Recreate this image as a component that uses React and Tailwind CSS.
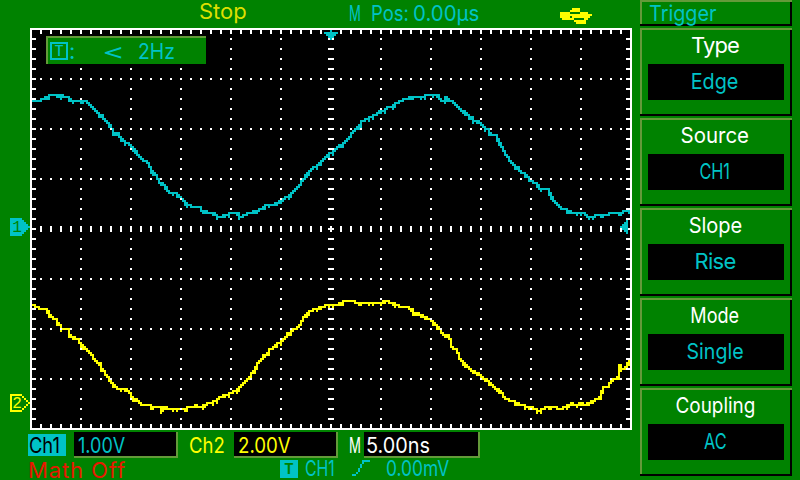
import React from 'react';

// the display is 400x240, every cell is drawn as 2x2 px
const CH1 = [
  [1, 10], [4, 10], [5, 9], [7, 8], [9, 7], [13, 7], [14, 8], [15, 7], [16, 8], [18, 8], [20, 10], [22, 10], [24, 10],
  [27, 10], [29, 12], [31, 14], [33, 16], [35, 17], [36, 19], [37, 20], [39, 22], [40, 24], [41, 26], [42, 27], [43, 26],
  [44, 28], [46, 30], [48, 31], [50, 33], [52, 35], [54, 38], [55, 39], [57, 40], [58, 41], [59, 43], [60, 45], [61, 46],
  [62, 47], [63, 49], [64, 51], [65, 51], [67, 53], [69, 56], [70, 56], [72, 56], [74, 58], [75, 59], [77, 61], [79, 62],
  [80, 63], [84, 63], [85, 65], [87, 65], [88, 66], [91, 66], [92, 67], [94, 68], [96, 67], [101, 66], [103, 66],
  [104, 68], [106, 67], [109, 66], [112, 65], [115, 64], [117, 62], [121, 62], [122, 61], [125, 60], [127, 58],
  [129, 57], [131, 55], [133, 53], [134, 52], [135, 50], [136, 49], [137, 47], [138, 46], [140, 44], [141, 43],
  [143, 42], [145, 40], [147, 38], [149, 36], [151, 35], [152, 34], [153, 33], [154, 32], [156, 31], [158, 29],
  [159, 28], [160, 26], [161, 25], [163, 23], [164, 22], [165, 20], [167, 19], [169, 18], [172, 17], [173, 16],
  [174, 15], [175, 15], [177, 14], [178, 13], [180, 13], [181, 12], [184, 10], [187, 9], [189, 8], [193, 8], [195, 8],
  [198, 7], [203, 7], [204, 9], [206, 10], [207, 8], [208, 9], [210, 10], [212, 12], [214, 14], [216, 15], [218, 17],
  [219, 19], [220, 18], [221, 20], [223, 20], [224, 21], [226, 23], [228, 24], [229, 26], [231, 27], [232, 27],
  [233, 29], [234, 31], [235, 33], [236, 35], [237, 37], [238, 38], [239, 40], [241, 42], [243, 43], [244, 45],
  [246, 46], [248, 48], [250, 50], [252, 51], [253, 52], [254, 54], [258, 54], [259, 56], [260, 58], [261, 60],
  [262, 61], [264, 63], [266, 64], [269, 65], [271, 66], [276, 66], [277, 67], [279, 68], [283, 67], [286, 67],
  [290, 66], [294, 66], [296, 65], [299, 65],
];

const CH2 = [
  [1, 12], [3, 13], [5, 14], [7, 14], [8, 15], [9, 17], [10, 18], [12, 19], [13, 21], [14, 22], [15, 24], [18, 24],
  [19, 27], [20, 28], [23, 29], [24, 31], [26, 33], [28, 35], [30, 37], [32, 40], [34, 41], [35, 44], [36, 45], [37, 47],
  [38, 48], [39, 49], [40, 51], [42, 53], [44, 54], [47, 54], [49, 56], [50, 58], [52, 59], [54, 61], [56, 62], [59, 62],
  [61, 63], [64, 63], [65, 65], [66, 63], [69, 64], [71, 64], [75, 64], [80, 63], [82, 62], [84, 63], [86, 62],
  [89, 61], [91, 60], [92, 60], [94, 58], [97, 57], [100, 56], [101, 55], [103, 54], [105, 52], [107, 50], [109, 48],
  [110, 46], [111, 45], [112, 43], [113, 41], [114, 40], [115, 39], [116, 37], [118, 36], [119, 34], [121, 33],
  [123, 31], [125, 30], [127, 28], [128, 26], [130, 25], [133, 23], [134, 22], [135, 20], [136, 18], [137, 17],
  [139, 15], [142, 14], [145, 13], [147, 12], [149, 12], [152, 12], [154, 11], [156, 10], [160, 10], [164, 11],
  [166, 11], [168, 11], [173, 11], [175, 11], [176, 10], [181, 11], [182, 12], [185, 13], [188, 13], [190, 14],
  [191, 16], [192, 17], [193, 16], [195, 17], [197, 18], [199, 19], [200, 20], [202, 22], [203, 23], [204, 24],
  [205, 26], [206, 27], [208, 27], [209, 29], [210, 33], [212, 34], [213, 36], [214, 39], [216, 41], [218, 43],
  [219, 44], [221, 45], [223, 46], [225, 48], [227, 49], [229, 51], [231, 53], [233, 54], [235, 56], [236, 58],
  [238, 59], [240, 60], [243, 61], [245, 62], [249, 63], [252, 64], [253, 65], [255, 64], [258, 63], [261, 63],
  [265, 64], [266, 63], [269, 62], [270, 61], [272, 62], [275, 61], [276, 62], [278, 61], [280, 60], [282, 59],
  [284, 58], [285, 55], [286, 53], [288, 53], [289, 51], [291, 49], [293, 48], [294, 42], [295, 44], [297, 43],
  [298, 41], [299, 40],
];

// columns where the signal jitters get one extra cell
const jitter = (x) => ((x * 37 + ((x * x) >> 2)) % 13 < 5 ? 1 : 0);

// one vertical run of cells per column, joined to the column before
const tracePath = (points, top) => {
  let d = '';
  let prev = points[0][1];
  for (let i = 1; i < points.length; i++) {
    const [x0, y0] = points[i - 1];
    const [x1, y1] = points[i];
    for (let x = x0; x < x1 || (i === points.length - 1 && x === x1); x++) {
      const y = Math.round(y0 + ((y1 - y0) * (x - x0)) / (x1 - x0));
      const a = Math.min(prev, y);
      const b = Math.max(prev, y);
      d += `M${x} ${a + top}h1v${b - a + 1 + jitter(x)}h-1z`;
      prev = y;
    }
  }
  return d;
};

const gridPath = () => {
  let d = '';
  for (let x = 5; x < 300; x += 5) {
    d += `M${x} 1h1v2h-1zM${x} 198h1v2h-1zM${x} 99h1v3h-1z`;
    for (let y = 25; y < 200; y += 25) d += `M${x} ${y}h1v1h-1z`;
  }
  for (let y = 5; y < 200; y += 5) {
    d += `M1 ${y}h2v1h-2zM298 ${y}h2v1h-2zM149 ${y}h3v1h-3z`;
    for (let x = 25; x < 300; x += 25) d += `M${x} ${y}h1v1h-1z`;
  }
  return d;
};

const menu = [
  { label: 'Type', value: 'Edge', labelStyle: 'tracking-[-0.9px]', valueStyle: 'scale-x-[0.9]' },
  { label: 'Source', value: 'CH1', labelStyle: 'scale-x-[0.93]', valueStyle: 'scale-x-[0.74]' },
  { label: 'Slope', value: 'Rise', labelStyle: 'scale-x-[0.91]', valueStyle: 'tracking-[-0.7px]' },
  { label: 'Mode', value: 'Single', labelStyle: 'scale-x-[0.82]', valueStyle: 'scale-x-[0.89]' },
  { label: 'Coupling', value: 'AC', labelStyle: 'scale-x-[0.86]', valueStyle: 'scale-x-[0.74]' },
];

function MenuItem({ item }) {
  return (
    <div className="h-[88px] px-2 pt-1.5 text-center shadow-[inset_0_2px_#639a39,inset_0_-2px_#000,inset_2px_0_#639a39,inset_-2px_0_#000]">
      <div className="h-[30px] pr-0.5 leading-[22px] text-white">
        <span className={`inline-block ${item.labelStyle}`}>{item.label}</span>
      </div>
      <div className="h-9 bg-black pr-0.5 leading-[34px] text-[#00c3c6]">
        <span className={`inline-block ${item.valueStyle}`}>{item.value}</span>
      </div>
    </div>
  );
}

function UsbIcon() {
  return (
    <svg className="h-4 w-8" viewBox="0 0 16 8" shapeRendering="crispEdges" fill="#ffff00">
      <path d="M6 0h4v1h-4zM5 1h5v1h-5zM0 2h5v1h-5zM10 2h4v1h-4zM0 3h16v1h-16zM0 4h5v1h-5zM6 4h9v1h-9zM1 5h6v1h-6zM12 5h2v1h-2zM7 6h6v1h-6zM8 7h5v1h-5z" />
    </svg>
  );
}

function Screen() {
  return (
    <div className="relative h-[402px] w-[602px] bg-black">
      <svg className="block h-full w-full" viewBox="0 0 301 201" shapeRendering="crispEdges">
        <path d={tracePath(CH1, 26)} fill="#00c3c6" />
        <path d={tracePath(CH2, 126)} fill="#ffff00" />
        <path d={gridPath()} fill="#fff" />
        <path d="M0 0h301v201h-301zM1 1v199h299v-199z" fill="#fff" fillRule="evenodd" />
        <path d="M150 1h1v1h3v1h-1v1h-1v1h-1v1h-1v-1h-1v-1h-1v-1h-1v-1h3z" fill="#00c3c6" />
        <path d="M298 96h1v7h-1v-1h-1v-1h-1v-1h-1v-1h1v-1h1v-1h1z" fill="#00c3c6" />
      </svg>
      <div className="absolute left-4 top-2 flex h-7 w-40 items-start border-l-2 border-t-2 border-[#639a39] bg-[#008200] pl-0.5 pt-1 leading-[18px] text-[#00c3c6]">
        <span className="flex h-[18px] w-[18px] items-center justify-center border-2 border-[#00c3c6] text-[14px] font-medium">T</span>
        <span className="w-[34px] pl-px">:</span>
        <span className="w-9 origin-left scale-x-[1.6]">&lt;</span>
        <span className="origin-left scale-x-[0.88]">2Hz</span>
      </div>
    </div>
  );
}

function ChannelMarkers() {
  return (
    <div className="flex h-[402px] w-[30px] flex-col pl-2.5">
      <svg className="mt-[190px] h-[18px] w-5" viewBox="0 0 10 9" shapeRendering="crispEdges">
        <path d="M0 0h6v1h1v1h1v1h1v1h1v1h-1v1h-1v1h-1v1h-1v1h-6z" fill="#00c3c6" />
        <text x="1.1" y="7" fontSize="8" className="font-[Liberation_Mono] font-normal" fill="#008200">1</text>
      </svg>
      <svg className="mt-[158px] h-[18px] w-5" viewBox="0 0 10 9" shapeRendering="crispEdges">
        <path d="M0 0h6v1h1v1h1v1h1v1h1v1h-1v1h-1v1h-1v1h-1v1h-6zM1 1v7h5v-1h1v-1h1v-1h1v-1h-1v-1h-1v-1h-1v-1z" fill="#ffff00" fillRule="evenodd" />
        <text x="1.1" y="7" fontSize="8" className="font-[Liberation_Mono] font-normal" fill="#ffff00">2</text>
      </svg>
    </div>
  );
}

function App() {
  return (
    <div className="flex h-[480px] w-[800px] overflow-hidden whitespace-pre bg-[#008200] font-[Inter,sans-serif] text-[22px] font-normal">
      <div className="flex w-[640px] flex-col">
        <div className="flex h-7 pl-[199px] text-[#00c3c6]">
          <span className="w-[150px] leading-[22px] text-[#dedf00]">Stop</span>
          <span className="w-[22px] leading-[26px]">
            <span className="inline-block origin-left scale-x-[0.6]">M</span>
          </span>
          <span className="w-[42px] origin-left scale-x-[0.84] leading-[26px]">Pos:</span>
          <span className="w-[147px] leading-[26px]">
            <span className="inline-block origin-left scale-x-[0.93]">0.00µs</span>
          </span>
          <span className="pt-2"><UsbIcon /></span>
        </div>

        <div className="flex">
          <ChannelMarkers />
          <Screen />
        </div>

        <div className="flex h-[29px] items-start pl-7 pt-0.5">
          <span className="mt-0.5 h-[22px] w-[38px] bg-[#00c3c6] pl-px leading-[22px] text-black">
            <span className="inline-block origin-left scale-x-[0.83]">Ch1</span>
          </span>
          <span className="ml-2 h-[26px] w-[104px] border-b-2 border-r-2 border-[#639a39] bg-black pl-1 leading-[26px] text-[#00c3c6]">
            <span className="inline-block origin-left scale-x-[0.82]">1.00V</span>
          </span>
          <span className="ml-[11px] w-[45px] leading-[26px] text-[#ffff00]">
            <span className="inline-block origin-left scale-x-[0.84]">Ch2</span>
          </span>
          <span className="h-[26px] w-[104px] border-b-2 border-r-2 border-[#639a39] bg-black pl-1 leading-[26px] text-[#ffff00]">
            <span className="inline-block origin-left scale-x-[0.85]">2.00V</span>
          </span>
          <span className="w-[26px] pl-[11px] leading-[26px] text-white">
            <span className="inline-block origin-left scale-x-[0.6]">M</span>
          </span>
          <span className="h-[26px] w-[116px] border-b-2 border-r-2 border-[#639a39] bg-black pl-0.5 leading-[26px] text-white">
            <span className="inline-block origin-left scale-x-90">5.00ns</span>
          </span>
        </div>

        <div className="flex h-[21px] items-start pl-7 text-[#00c3c6]">
          <span className="w-[252px] leading-[22px] tracking-[0.9px] text-[#e71800]">Math Off</span>
          <span className="mt-px h-[18px] w-[18px] bg-[#00c3c6] text-center text-[14px] font-bold leading-[18px] text-[#008200]">T</span>
          <span className="w-[54px] pl-[7px] leading-[18px]">
            <span className="inline-block origin-left scale-x-[0.72]">CH1</span>
          </span>
          <svg className="mt-px h-4 w-[18px]" viewBox="0 0 9 8" shapeRendering="crispEdges" fill="#00c3c6">
            <path d="M5 0h4v1h-4zM5 1h1v1h-1zM4 2h1v2h-1zM3 4h1v2h-1zM2 6h1v1h-1zM0 7h2v1h-2z" />
          </svg>
          <span className="pl-4 leading-[18px]">
            <span className="inline-block origin-left scale-x-[0.79]">0.00mV</span>
          </span>
        </div>
      </div>

      <div className="flex w-[152px] flex-col gap-0.5">
        <div className="h-[26px] pl-[9px] leading-[26px] text-[#00c3c6] shadow-[inset_0_2px_#639a39,inset_0_-2px_#000,inset_2px_0_#639a39,inset_-2px_0_#000]">
          <span className="inline-block origin-left scale-x-[0.9]">Trigger</span>
        </div>
        {menu.map((item) => (
          <MenuItem key={item.label} item={item} />
        ))}
      </div>
    </div>
  );
}

export default App;
